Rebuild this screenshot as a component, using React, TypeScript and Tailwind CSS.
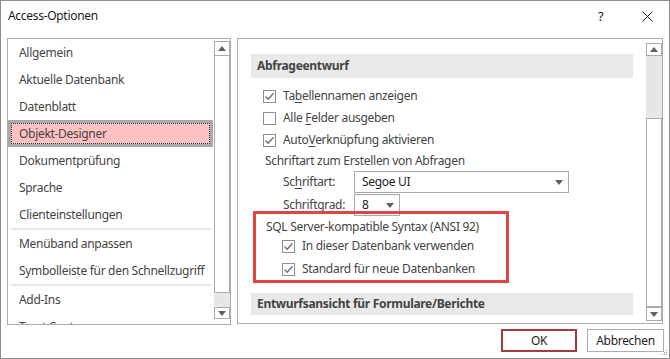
import React from 'react';

const font = "font-['Segoe_UI','Noto_Sans',sans-serif]";

function Check({ checked }: { checked: boolean }) {
  return (
    <span className="w-[13px] h-[13px] border border-[#8f8f8f] bg-white flex items-center justify-center shrink-0">
      {checked && (
        <svg width="11" height="11" viewBox="0 0 11 11">
          <polyline points="1.5,5.5 4.2,8.2 9.5,2.2" fill="none" stroke="#6b6b6b" strokeWidth="1.3" />
        </svg>
      )}
    </span>
  );
}

function Arrow({ up }: { up?: boolean }) {
  return (
    <svg width="8" height="5" viewBox="0 0 8 5">
      <polygon points={up ? '0,5 8,5 4,0' : '0,0 8,0 4,5'} fill="#606060" />
    </svg>
  );
}

function U({ children }: { children: React.ReactNode }) {
  return <span className="underline underline-offset-2">{children}</span>;
}

const items = [
  'Allgemein',
  'Aktuelle Datenbank',
  'Datenblatt',
  'Objekt-Designer',
  'Dokumentprüfung',
  'Sprache',
  'Clienteinstellungen',
  '-',
  'Menüband anpassen',
  'Symbolleiste für den Schnellzugriff',
  '-',
  'Add-Ins',
  'Trust Center',
];

export default function App() {
  return (
    <div className={`relative w-[670px] h-[359px] bg-white border border-[#8c8c8c] flex flex-col text-[12px] tracking-[-0.3px] text-[#444] ${font}`}>
      {/* Titelleiste */}
      <div className="h-[37px] flex items-start pt-[7px] pl-[7px] text-[#1a1a1a]">
        <span className="leading-[16px]">Access-Optionen</span>
        <span className="ml-auto w-[10px] leading-[16px] text-[13px]">?</span>
        <svg className="ml-[34px] mr-[16px] mt-[3px]" width="11" height="11" viewBox="0 0 11 11">
          <path d="M0.5 0.5 L10.5 10.5 M10.5 0.5 L0.5 10.5" stroke="#222" strokeWidth="1" />
        </svg>
      </div>

      <div className="flex gap-[6px] pl-[6px] h-[287px]">
        {/* Kategorien */}
        <div className="w-[224px] h-[287px] border border-[#ababab] flex overflow-hidden">
          <div className="flex-1 flex flex-col">
            {items.map((it, i) =>
              it === '-' ? (
                <div key={i} className="h-[2px] mx-[3px] bg-[#e6e6e6] shrink-0" />
              ) : it === 'Objekt-Designer' ? (
                <div key={i} className="h-[27px] shrink-0 mr-[1px] border-[3px] border-[#a9a9a9] bg-[#ffc1c1]">
                  <div className="h-full border border-dotted border-[#1f3a3a] flex items-center pl-[7px]">{it}</div>
                </div>
              ) : (
                <div key={i} className="h-[27px] shrink-0 flex items-center pl-[11px] whitespace-nowrap">{it}</div>
              )
            )}
          </div>
          <div className="w-[16px] flex flex-col pt-[2px]">
            <div className="h-[15px] border border-[#ababab] flex items-center justify-center"><Arrow up /></div>
            <div className="h-[237px] border border-t-0 border-[#ababab] bg-white" />
            <div className="h-[14px] bg-[#e6e6e6]" />
            <div className="h-[12px] border border-[#ababab] flex items-center justify-center"><Arrow /></div>
          </div>
        </div>

        {/* Inhalt */}
        <div className="w-[426px] h-[286px] border border-[#ababab] flex overflow-hidden">
          <div className="flex-1 flex flex-col">
            <div className="mt-[15px] mx-[13px] h-[24px] bg-[#e9e9e9] flex items-center pl-[6px] font-bold">Abfrageentwurf</div>
            <div className="mt-[7px] h-[22px] flex items-center pl-[25px] gap-[7px]">
              <Check checked /> <span>Ta<U>b</U>ellennamen anzeigen</span>
            </div>
            <div className="h-[22px] flex items-center pl-[25px] gap-[7px]">
              <Check checked={false} /> <span>Alle <U>F</U>elder ausgeben</span>
            </div>
            <div className="h-[22px] flex items-center pl-[25px] gap-[7px]">
              <Check checked /> <span>Auto<U>V</U>erknüpfung aktivieren</span>
            </div>
            <div className="h-[20px] flex items-center pl-[27px]">Schriftart zum Erstellen von Abfragen</div>
            <div className="h-[22px] flex items-center pl-[45px]">
              <span className="w-[71px]">Sc<U>h</U>riftart:</span>
              <div className="w-[215px] h-[22px] border border-[#a8a8a8] flex items-center pl-[7px] pr-[5px] text-[#222]">
                <span>Segoe UI</span>
                <span className="ml-auto"><Arrow /></span>
              </div>
            </div>
            <div className="mt-[1px] h-[22px] flex items-center pl-[45px]">
              <span className="w-[71px]">Schriftgrad:</span>
              <div className="w-[46px] h-[22px] border border-[#a8a8a8] flex items-center pl-[7px] pr-[5px] text-[#222]">
                <span>8</span>
                <span className="ml-auto"><Arrow /></span>
              </div>
            </div>
            <div className="mt-[2px] h-[18px] flex items-center pl-[28px]">SQL Server-kompatible Syntax (ANSI 92)</div>
            <div className="h-[20px] flex items-center pl-[44px] gap-[7px]">
              <Check checked /> <span>In dieser Datenbank verwenden</span>
            </div>
            <div className="mt-[3px] h-[20px] flex items-center pl-[44px] gap-[7px]">
              <Check checked /> <span>Standard für neue Datenbanken</span>
            </div>
            <div className="mt-[14px] mx-[13px] h-[22px] shrink-0 bg-[#e9e9e9] flex items-center pl-[6px] font-bold">Entwurfsansicht für Formulare/Berichte</div>
          </div>
          <div className="w-[16px] flex flex-col pt-[4px]">
            <div className="h-[13px] border border-[#ababab] flex items-center justify-center"><Arrow up /></div>
            <div className="h-[62px] bg-[#e6e6e6]" />
            <div className="h-[189px] border border-[#ababab] bg-white" />
            <div className="h-[14px] border border-[#ababab] flex items-center justify-center"><Arrow /></div>
          </div>
        </div>
      </div>

      {/* Schaltflächen */}
      <div className="flex justify-end gap-[10px] pr-[5px] mt-[4px]">
        <button className="w-[76px] h-[23px] border-2 border-[#a53a3f] bg-white text-[#222] flex items-center justify-center">OK</button>
        <button className="w-[77px] h-[23px] border border-[#adadad] bg-white text-[#222] flex items-center justify-center">Abbrechen</button>
      </div>

      <svg className="absolute right-[1px] bottom-[1px]" width="7" height="7" viewBox="0 0 7 7">
        <rect x="5" y="0" width="1" height="1" fill="#999" />
        <rect x="3" y="2" width="1" height="1" fill="#999" />
        <rect x="5" y="2" width="1" height="1" fill="#999" />
        <rect x="1" y="4" width="1" height="1" fill="#999" />
        <rect x="3" y="4" width="1" height="1" fill="#999" />
        <rect x="5" y="4" width="1" height="1" fill="#999" />
      </svg>

      {/* rote Markierung */}
      <div className="absolute left-[252px] top-[210px] w-[256px] h-[72px] border-[3px] border-[#e04545] pointer-events-none" />
    </div>
  );
}
